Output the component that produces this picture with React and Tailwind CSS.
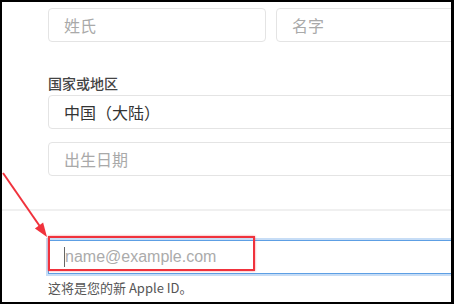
import React from "react";

const cjk = { fontFamily: '"Noto Sans CJK SC", "Noto Sans", sans-serif' };

function Field({ w, children, dark }) {
  return (
    <div
      className={`${w} h-[34px] shrink-0 rounded-[4px] border border-[#e4e4e4] bg-white pl-[15px] flex items-center text-[16px] ${dark ? "text-[#333]" : "text-[#a9a9a9]"}`}
      style={cjk}
    >
      {children}
    </div>
  );
}

export default function App() {
  return (
    <div className="w-[454px] h-[304px] bg-black pt-[2px] pl-[2px] pr-[3px] pb-[2px]">
      <div className="relative w-full h-full bg-white overflow-hidden">
        <div className="pl-[46px] pt-[6px]">
          <div className="flex gap-[10px]">
            <Field w="w-[218px]">姓氏</Field>
            <Field w="w-[218px]">名字</Field>
          </div>
          <div
            className="mt-[31px] h-[20px] leading-[20px] text-[14px] font-medium text-[#444]"
            style={cjk}
          >
            国家或地区
          </div>
          <div className="mt-[2px]">
            <Field w="w-[446px]" dark>中国（大陆）</Field>
          </div>
          <div className="mt-[13px]">
            <Field w="w-[446px]">出生日期</Field>
          </div>
        </div>
        <div className="mt-[33px] h-[2px] bg-[#f0f0f0]" />
        <div className="pl-[46px]">
          <div className="mt-[29px] w-[446px] h-[34px] border border-[#5d9fe4] shadow-[0_0_0_2px_rgba(130,180,235,0.45)] bg-white pl-[15px] flex items-center">
            <span className="w-px h-[20px] bg-[#666]" />
            <span
              className="text-[16px] text-[#ababab]"
              style={{ fontFamily: '"Liberation Sans", Arial, sans-serif' }}
            >
              name@example.com
            </span>
          </div>
          <div className="mt-[5px] h-[18px] leading-[18px] text-[13px] text-[#555]" style={cjk}>
            这将是您的新 Apple ID。
          </div>
        </div>
        <div className="absolute left-[46px] top-[234px] w-[207px] h-[35px] border-2 border-[#f0323c] shadow-[0_0_2px_rgba(240,50,60,0.6)]" />
        <svg className="absolute inset-0" width="449" height="300" viewBox="0 0 449 300">
          <line x1="1" y1="171" x2="38" y2="224.5" stroke="#f0323c" strokeWidth="2" />
          <polygon points="45,235 32.9,226.4 41.1,220.6" fill="#f0323c" />
        </svg>
      </div>
    </div>
  );
}
